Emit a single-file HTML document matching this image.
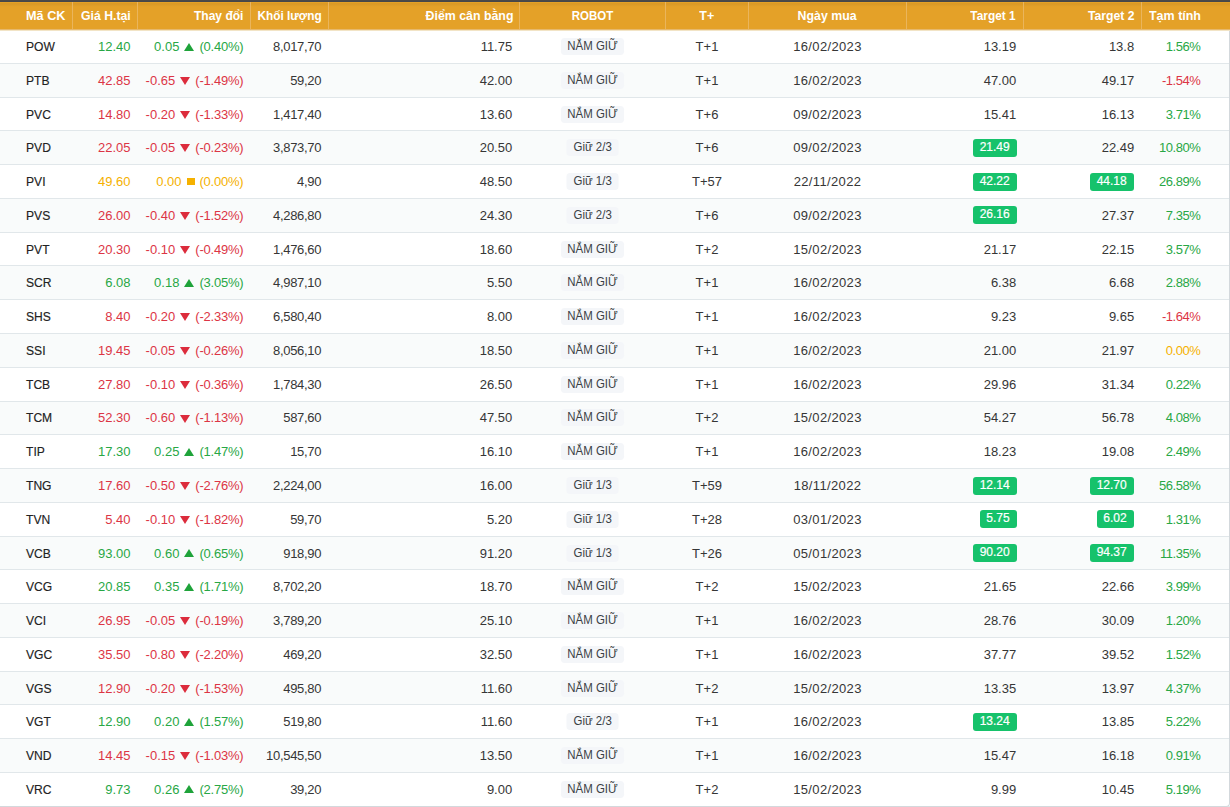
<!DOCTYPE html>
<html><head><meta charset="utf-8"><title>Robot</title>
<style>
html,body{margin:0;padding:0;background:#fff;}
body{width:1230px;height:807px;overflow:hidden;position:relative;font-family:"Liberation Sans",sans-serif;}
#wrap{position:absolute;left:0;top:0;width:1230px;height:807px;overflow:hidden;}
.topbar{position:absolute;left:0;top:0;width:1230px;height:2px;background:linear-gradient(#4b4947 0,#4b4947 1px,#46474a 1px);z-index:3;}
.hb1{position:absolute;left:0;top:29px;width:1230px;height:1px;background:#e6b86c;z-index:3;}
.hb2{position:absolute;left:0;top:30px;width:1230px;height:1px;background:#f2e4c6;z-index:3;}
.hdr{position:absolute;left:0;top:2px;width:1230px;height:28px;z-index:2;background:linear-gradient(#e4a126 0,#e4a126 1px,#d99926 1px,#dc9b27 3px,#e0a029 4px,#e4a128 5px);color:#fff;font-weight:bold;font-size:13px;}
.hc{position:absolute;top:0;height:28px;line-height:28px;white-space:nowrap;}
.vl{position:absolute;top:0;width:1px;height:28px;background:#eab55c;}
.h0{left:26px;}
.h1{right:calc(1230px - 130.5px);}
.h2{right:calc(1230px - 243.5px);}
.h3{right:calc(1230px - 321.5px);}
.h4{right:calc(1230px - 513px);}
.h5{left:519.5px;width:146px;text-align:center;}
.h6{left:665.5px;width:83px;text-align:center;}
.h7{left:748.5px;width:158px;text-align:center;}
.h8{right:calc(1230px - 1015.6px);}
.h9{right:calc(1230px - 1134.5px);}
.h10{left:1149px;}
.row{position:absolute;left:0;width:1230px;height:33.76px;background:#fff;border-bottom:1px solid #e1e7ea;box-sizing:border-box;font-size:13px;color:#363636;}
.row.odd{background:#f9fbfb;}
.c{position:absolute;top:-0.05px;height:33px;line-height:33px;white-space:nowrap;}
.c0{left:26px;color:#222;}
.c1{right:calc(1230px - 130.5px);}
.c2{right:calc(1230px - 243.5px);}
.c3{right:calc(1230px - 321.2px);letter-spacing:-0.3px;}
.c4{right:calc(1230px - 512.2px);}
.c5{left:519.5px;width:146px;text-align:center;}
.c6{left:665.5px;width:83px;text-align:center;}
.c7{left:748.5px;width:158px;text-align:center;letter-spacing:0.35px;}
.c8{right:calc(1230px - 1016.2px);}
.c9{right:calc(1230px - 1134.2px);}
.c10{right:calc(1230px - 1200.2px);letter-spacing:-0.5px;}
.g{color:#28a745;}
.r{color:#dc3545;}
.y{color:#f5b100;}
.tri{display:inline-block;width:0;height:0;vertical-align:middle;margin:0 5px 0 5px;}
.tri.up{border-left:5px solid transparent;border-right:5px solid transparent;border-bottom:8px solid #1fa33a;position:relative;top:-1px;}
.tri.dn{border-left:5px solid transparent;border-right:5px solid transparent;border-top:8.5px solid #dc2c3c;position:relative;top:-0.5px;}
.sq{display:inline-block;width:8px;height:7px;background:#f5b100;vertical-align:middle;margin:0 4.8px 0 5px;position:relative;top:-1px;}
.pp{letter-spacing:-0.2px;}
.sx{display:inline-block;}
.h0 .sx,.c0 .sx{transform-origin:left center;}
.h1 .sx,.h2 .sx,.h3 .sx,.h4 .sx,.h8 .sx,.h9 .sx{transform-origin:right center;}
.h5 .sx,.h6 .sx,.h7 .sx{transform-origin:center center;}
.h10 .sx{transform-origin:left center;}
.sym{transform:scaleX(0.93);-webkit-text-stroke:0.15px #222;}
.rb{display:inline-block;background:#f4f6f9;color:#3a3f44;border-radius:4px;padding:0 7px;line-height:17px;font-size:12.5px;transform:scaleX(0.915);position:relative;top:-1px;}
.gb{display:inline-block;vertical-align:top;margin-top:7.6px;background:#16c26b;color:#fff;-webkit-text-stroke:0.2px #fff;border-radius:3px;padding:0 7.2px 1px 6.5px;margin-right:-0.7px;height:17px;line-height:17px;font-size:12px;}
.frame{position:absolute;left:-10px;top:30px;width:1239px;height:776px;border-right:1px solid #d3d8dc;border-bottom:1px solid #d3d8dc;border-bottom-right-radius:4px;pointer-events:none;}
.c9 .gb{margin-right:0.3px;}
.rb.giu{padding:0 7.8px;}

</style></head><body>
<div id="wrap">
<div class="topbar"></div>
<div class="hb1"></div><div class="hb2"></div>
<div class="hdr">
<div class="hc h0"><span class="sx" style="transform:scaleX(0.975)">Mã CK</span></div><div class="hc h1"><span class="sx" style="transform:scaleX(0.943)">Giá H.tại</span></div><div class="hc h2"><span class="sx" style="transform:scaleX(0.926)">Thay đổi</span></div><div class="hc h3"><span class="sx" style="transform:scaleX(0.909)">Khối lượng</span></div><div class="hc h4"><span class="sx" style="transform:scaleX(0.951)">Điểm cân bằng</span></div><div class="hc h5"><span class="sx" style="transform:scaleX(0.885)">ROBOT</span></div><div class="hc h6"><span class="sx" style="transform:scaleX(0.956)">T+</span></div><div class="hc h7"><span class="sx" style="transform:scaleX(0.948)">Ngày mua</span></div><div class="hc h8"><span class="sx" style="transform:scaleX(0.912)">Target 1</span></div><div class="hc h9"><span class="sx" style="transform:scaleX(0.94)">Target 2</span></div><div class="hc h10"><span class="sx" style="transform:scaleX(0.96)">Tạm tính</span></div><div class="vl" style="left:72px"></div><div class="vl" style="left:137px"></div><div class="vl" style="left:250px"></div><div class="vl" style="left:328px"></div><div class="vl" style="left:519px"></div><div class="vl" style="left:665px"></div><div class="vl" style="left:748px"></div><div class="vl" style="left:906px"></div><div class="vl" style="left:1023px"></div><div class="vl" style="left:1141px"></div>
</div>
<div class="row" style="top:30.10px"><div class="c c0"><span class="sx sym">POW</span></div><div class="c c1 g">12.40</div><div class="c c2 g"><span>0.05</span><span class="tri up"></span><span class="pp">(0.40%)</span></div><div class="c c3">8,017,70</div><div class="c c4">11.75</div><div class="c c5"><span class="rb">NẮM GIỮ</span></div><div class="c c6">T+1</div><div class="c c7">16/02/2023</div><div class="c c8">13.19</div><div class="c c9">13.8</div><div class="c c10 g">1.56%</div></div>
<div class="row odd" style="top:63.87px"><div class="c c0"><span class="sx sym">PTB</span></div><div class="c c1 r">42.85</div><div class="c c2 r"><span>-0.65</span><span class="tri dn"></span><span class="pp">(-1.49%)</span></div><div class="c c3">59,20</div><div class="c c4">42.00</div><div class="c c5"><span class="rb">NẮM GIỮ</span></div><div class="c c6">T+1</div><div class="c c7">16/02/2023</div><div class="c c8">47.00</div><div class="c c9">49.17</div><div class="c c10 r">-1.54%</div></div>
<div class="row" style="top:97.63px"><div class="c c0"><span class="sx sym">PVC</span></div><div class="c c1 r">14.80</div><div class="c c2 r"><span>-0.20</span><span class="tri dn"></span><span class="pp">(-1.33%)</span></div><div class="c c3">1,417,40</div><div class="c c4">13.60</div><div class="c c5"><span class="rb">NẮM GIỮ</span></div><div class="c c6">T+6</div><div class="c c7">09/02/2023</div><div class="c c8">15.41</div><div class="c c9">16.13</div><div class="c c10 g">3.71%</div></div>
<div class="row odd" style="top:131.40px"><div class="c c0"><span class="sx sym">PVD</span></div><div class="c c1 r">22.05</div><div class="c c2 r"><span>-0.05</span><span class="tri dn"></span><span class="pp">(-0.23%)</span></div><div class="c c3">3,873,70</div><div class="c c4">20.50</div><div class="c c5"><span class="rb giu">Giữ 2/3</span></div><div class="c c6">T+6</div><div class="c c7">09/02/2023</div><div class="c c8"><span class="gb">21.49</span></div><div class="c c9">22.49</div><div class="c c10 g">10.80%</div></div>
<div class="row" style="top:165.16px"><div class="c c0"><span class="sx sym">PVI</span></div><div class="c c1 y">49.60</div><div class="c c2 y"><span>0.00</span><span class="sq"></span><span class="pp">(0.00%)</span></div><div class="c c3">4,90</div><div class="c c4">48.50</div><div class="c c5"><span class="rb giu">Giữ 1/3</span></div><div class="c c6">T+57</div><div class="c c7">22/11/2022</div><div class="c c8"><span class="gb">42.22</span></div><div class="c c9"><span class="gb">44.18</span></div><div class="c c10 g">26.89%</div></div>
<div class="row odd" style="top:198.92px"><div class="c c0"><span class="sx sym">PVS</span></div><div class="c c1 r">26.00</div><div class="c c2 r"><span>-0.40</span><span class="tri dn"></span><span class="pp">(-1.52%)</span></div><div class="c c3">4,286,80</div><div class="c c4">24.30</div><div class="c c5"><span class="rb giu">Giữ 2/3</span></div><div class="c c6">T+6</div><div class="c c7">09/02/2023</div><div class="c c8"><span class="gb">26.16</span></div><div class="c c9">27.37</div><div class="c c10 g">7.35%</div></div>
<div class="row" style="top:232.69px"><div class="c c0"><span class="sx sym">PVT</span></div><div class="c c1 r">20.30</div><div class="c c2 r"><span>-0.10</span><span class="tri dn"></span><span class="pp">(-0.49%)</span></div><div class="c c3">1,476,60</div><div class="c c4">18.60</div><div class="c c5"><span class="rb">NẮM GIỮ</span></div><div class="c c6">T+2</div><div class="c c7">15/02/2023</div><div class="c c8">21.17</div><div class="c c9">22.15</div><div class="c c10 g">3.57%</div></div>
<div class="row odd" style="top:266.46px"><div class="c c0"><span class="sx sym">SCR</span></div><div class="c c1 g">6.08</div><div class="c c2 g"><span>0.18</span><span class="tri up"></span><span class="pp">(3.05%)</span></div><div class="c c3">4,987,10</div><div class="c c4">5.50</div><div class="c c5"><span class="rb">NẮM GIỮ</span></div><div class="c c6">T+1</div><div class="c c7">16/02/2023</div><div class="c c8">6.38</div><div class="c c9">6.68</div><div class="c c10 g">2.88%</div></div>
<div class="row" style="top:300.22px"><div class="c c0"><span class="sx sym">SHS</span></div><div class="c c1 r">8.40</div><div class="c c2 r"><span>-0.20</span><span class="tri dn"></span><span class="pp">(-2.33%)</span></div><div class="c c3">6,580,40</div><div class="c c4">8.00</div><div class="c c5"><span class="rb">NẮM GIỮ</span></div><div class="c c6">T+1</div><div class="c c7">16/02/2023</div><div class="c c8">9.23</div><div class="c c9">9.65</div><div class="c c10 r">-1.64%</div></div>
<div class="row odd" style="top:333.99px"><div class="c c0"><span class="sx sym">SSI</span></div><div class="c c1 r">19.45</div><div class="c c2 r"><span>-0.05</span><span class="tri dn"></span><span class="pp">(-0.26%)</span></div><div class="c c3">8,056,10</div><div class="c c4">18.50</div><div class="c c5"><span class="rb">NẮM GIỮ</span></div><div class="c c6">T+1</div><div class="c c7">16/02/2023</div><div class="c c8">21.00</div><div class="c c9">21.97</div><div class="c c10 y">0.00%</div></div>
<div class="row" style="top:367.75px"><div class="c c0"><span class="sx sym">TCB</span></div><div class="c c1 r">27.80</div><div class="c c2 r"><span>-0.10</span><span class="tri dn"></span><span class="pp">(-0.36%)</span></div><div class="c c3">1,784,30</div><div class="c c4">26.50</div><div class="c c5"><span class="rb">NẮM GIỮ</span></div><div class="c c6">T+1</div><div class="c c7">16/02/2023</div><div class="c c8">29.96</div><div class="c c9">31.34</div><div class="c c10 g">0.22%</div></div>
<div class="row odd" style="top:401.52px"><div class="c c0"><span class="sx sym">TCM</span></div><div class="c c1 r">52.30</div><div class="c c2 r"><span>-0.60</span><span class="tri dn"></span><span class="pp">(-1.13%)</span></div><div class="c c3">587,60</div><div class="c c4">47.50</div><div class="c c5"><span class="rb">NẮM GIỮ</span></div><div class="c c6">T+2</div><div class="c c7">15/02/2023</div><div class="c c8">54.27</div><div class="c c9">56.78</div><div class="c c10 g">4.08%</div></div>
<div class="row" style="top:435.28px"><div class="c c0"><span class="sx sym">TIP</span></div><div class="c c1 g">17.30</div><div class="c c2 g"><span>0.25</span><span class="tri up"></span><span class="pp">(1.47%)</span></div><div class="c c3">15,70</div><div class="c c4">16.10</div><div class="c c5"><span class="rb">NẮM GIỮ</span></div><div class="c c6">T+1</div><div class="c c7">16/02/2023</div><div class="c c8">18.23</div><div class="c c9">19.08</div><div class="c c10 g">2.49%</div></div>
<div class="row odd" style="top:469.05px"><div class="c c0"><span class="sx sym">TNG</span></div><div class="c c1 r">17.60</div><div class="c c2 r"><span>-0.50</span><span class="tri dn"></span><span class="pp">(-2.76%)</span></div><div class="c c3">2,224,00</div><div class="c c4">16.00</div><div class="c c5"><span class="rb giu">Giữ 1/3</span></div><div class="c c6">T+59</div><div class="c c7">18/11/2022</div><div class="c c8"><span class="gb">12.14</span></div><div class="c c9"><span class="gb">12.70</span></div><div class="c c10 g">56.58%</div></div>
<div class="row" style="top:502.81px"><div class="c c0"><span class="sx sym">TVN</span></div><div class="c c1 r">5.40</div><div class="c c2 r"><span>-0.10</span><span class="tri dn"></span><span class="pp">(-1.82%)</span></div><div class="c c3">59,70</div><div class="c c4">5.20</div><div class="c c5"><span class="rb giu">Giữ 1/3</span></div><div class="c c6">T+28</div><div class="c c7">03/01/2023</div><div class="c c8"><span class="gb">5.75</span></div><div class="c c9"><span class="gb">6.02</span></div><div class="c c10 g">1.31%</div></div>
<div class="row odd" style="top:536.58px"><div class="c c0"><span class="sx sym">VCB</span></div><div class="c c1 g">93.00</div><div class="c c2 g"><span>0.60</span><span class="tri up"></span><span class="pp">(0.65%)</span></div><div class="c c3">918,90</div><div class="c c4">91.20</div><div class="c c5"><span class="rb giu">Giữ 1/3</span></div><div class="c c6">T+26</div><div class="c c7">05/01/2023</div><div class="c c8"><span class="gb">90.20</span></div><div class="c c9"><span class="gb">94.37</span></div><div class="c c10 g">11.35%</div></div>
<div class="row" style="top:570.34px"><div class="c c0"><span class="sx sym">VCG</span></div><div class="c c1 g">20.85</div><div class="c c2 g"><span>0.35</span><span class="tri up"></span><span class="pp">(1.71%)</span></div><div class="c c3">8,702,20</div><div class="c c4">18.70</div><div class="c c5"><span class="rb">NẮM GIỮ</span></div><div class="c c6">T+2</div><div class="c c7">15/02/2023</div><div class="c c8">21.65</div><div class="c c9">22.66</div><div class="c c10 g">3.99%</div></div>
<div class="row odd" style="top:604.11px"><div class="c c0"><span class="sx sym">VCI</span></div><div class="c c1 r">26.95</div><div class="c c2 r"><span>-0.05</span><span class="tri dn"></span><span class="pp">(-0.19%)</span></div><div class="c c3">3,789,20</div><div class="c c4">25.10</div><div class="c c5"><span class="rb">NẮM GIỮ</span></div><div class="c c6">T+1</div><div class="c c7">16/02/2023</div><div class="c c8">28.76</div><div class="c c9">30.09</div><div class="c c10 g">1.20%</div></div>
<div class="row" style="top:637.87px"><div class="c c0"><span class="sx sym">VGC</span></div><div class="c c1 r">35.50</div><div class="c c2 r"><span>-0.80</span><span class="tri dn"></span><span class="pp">(-2.20%)</span></div><div class="c c3">469,20</div><div class="c c4">32.50</div><div class="c c5"><span class="rb">NẮM GIỮ</span></div><div class="c c6">T+1</div><div class="c c7">16/02/2023</div><div class="c c8">37.77</div><div class="c c9">39.52</div><div class="c c10 g">1.52%</div></div>
<div class="row odd" style="top:671.63px"><div class="c c0"><span class="sx sym">VGS</span></div><div class="c c1 r">12.90</div><div class="c c2 r"><span>-0.20</span><span class="tri dn"></span><span class="pp">(-1.53%)</span></div><div class="c c3">495,80</div><div class="c c4">11.60</div><div class="c c5"><span class="rb">NẮM GIỮ</span></div><div class="c c6">T+2</div><div class="c c7">15/02/2023</div><div class="c c8">13.35</div><div class="c c9">13.97</div><div class="c c10 g">4.37%</div></div>
<div class="row" style="top:705.40px"><div class="c c0"><span class="sx sym">VGT</span></div><div class="c c1 g">12.90</div><div class="c c2 g"><span>0.20</span><span class="tri up"></span><span class="pp">(1.57%)</span></div><div class="c c3">519,80</div><div class="c c4">11.60</div><div class="c c5"><span class="rb giu">Giữ 2/3</span></div><div class="c c6">T+1</div><div class="c c7">16/02/2023</div><div class="c c8"><span class="gb">13.24</span></div><div class="c c9">13.85</div><div class="c c10 g">5.22%</div></div>
<div class="row odd" style="top:739.17px"><div class="c c0"><span class="sx sym">VND</span></div><div class="c c1 r">14.45</div><div class="c c2 r"><span>-0.15</span><span class="tri dn"></span><span class="pp">(-1.03%)</span></div><div class="c c3">10,545,50</div><div class="c c4">13.50</div><div class="c c5"><span class="rb">NẮM GIỮ</span></div><div class="c c6">T+1</div><div class="c c7">16/02/2023</div><div class="c c8">15.47</div><div class="c c9">16.18</div><div class="c c10 g">0.91%</div></div>
<div class="row" style="top:772.93px"><div class="c c0"><span class="sx sym">VRC</span></div><div class="c c1 g">9.73</div><div class="c c2 g"><span>0.26</span><span class="tri up"></span><span class="pp">(2.75%)</span></div><div class="c c3">39,20</div><div class="c c4">9.00</div><div class="c c5"><span class="rb">NẮM GIỮ</span></div><div class="c c6">T+2</div><div class="c c7">15/02/2023</div><div class="c c8">9.99</div><div class="c c9">10.45</div><div class="c c10 g">5.19%</div></div>
<div class="frame"></div>
</div>
</body></html>
